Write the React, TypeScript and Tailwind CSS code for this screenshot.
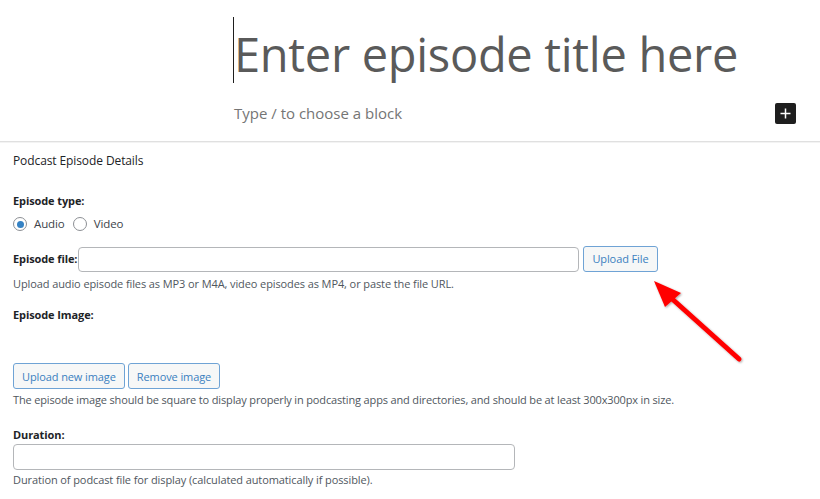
const font = { fontFamily: '"Open Sans", "Liberation Sans", sans-serif' }

function Radio({ checked, label }: { checked?: boolean; label: string }) {
  return (
    <label className="flex items-center gap-[7px]">
      <span className="w-[14px] h-[14px] rounded-full border border-[#8c8f94] flex items-center justify-center bg-white">
        {checked && <span className="w-[7px] h-[7px] rounded-full bg-[#3582c4]" />}
      </span>
      <span>{label}</span>
    </label>
  )
}

function Button({ children }: { children: string }) {
  return (
    <button className="h-[26px] px-[8px] rounded-[3px] border border-[#6fa3d5] bg-[#f6f7f7] text-[#3a80c0] text-[11px] tracking-[-0.1px] leading-none">
      {children}
    </button>
  )
}

export default function App() {
  return (
    <div className="relative w-[820px] h-[499px] bg-white overflow-hidden text-[#1d2327]" style={font}>
      <div className="h-[142px] border-b border-[#e0e0e0] shadow-[0_1px_0_#f3f3f3]">
        <div className="pl-[233px] pt-[17px]">
          <div className="h-[66px] border-l border-[#1e1e1e] text-[47px] leading-[74px] text-[#5a5a5a] tracking-[-0.3px] whitespace-nowrap">
            Enter episode title here
          </div>
        </div>
        <div className="flex items-center justify-between pl-[234px] pr-[24px] mt-[18px]">
          <span className="text-[15px] leading-[24px] text-[#757575]">Type / to choose a block</span>
          <span className="w-[21px] h-[21px] bg-[#1e1e1e] rounded-[2px] flex items-center justify-center">
            <svg width="13" height="13" viewBox="0 0 13 13">
              <path d="M6.5 1.5v10M1.5 6.5h10" stroke="#fff" strokeWidth="1.5" />
            </svg>
          </span>
        </div>
      </div>

      <div className="px-[13px] text-[11px] tracking-[-0.1px]">
        <div className="mt-[9px] leading-[20px] text-[12px] tracking-[-0.1px]">Podcast Episode Details</div>

        <div className="mt-[20px] leading-[20px] font-bold">Episode type:</div>
        <div className="mt-[3px] flex items-center gap-[8px] leading-[20px] text-[11.5px] text-[#3c434a]">
          <Radio checked label="Audio" />
          <Radio label="Video" />
        </div>

        <div className="mt-[13px] flex items-center">
          <span className="font-bold">Episode file:</span>
          <input className="ml-[1px] w-[501px] h-[25px] rounded-[4px] border border-[#b4b6b9] bg-white" />
          <div className="ml-[4px] -mt-[2px]">
            <Button>Upload File</Button>
          </div>
        </div>
        <div className="mt-[2px] leading-[20px] text-[#50575e]">
          Upload audio episode files as MP3 or M4A, video episodes as MP4, or paste the file URL.
        </div>

        <div className="mt-[11px] leading-[20px] font-bold">Episode Image:</div>
        <div className="mt-[38px] flex gap-[3px]">
          <Button>Upload new image</Button>
          <Button>Remove image</Button>
        </div>
        <div className="mt-[1px] leading-[20px] text-[#50575e] tracking-[-0.15px]">
          The episode image should be square to display properly in podcasting apps and directories, and should be at least 300x300px in size.
        </div>

        <div className="mt-[16px] leading-[18px] font-bold">Duration:</div>
        <input className="block w-[502px] h-[26px] rounded-[4px] border border-[#b4b6b9] bg-white" />
        <div className="mt-[0px] leading-[20px] text-[#50575e]">
          Duration of podcast file for display (calculated automatically if possible).
        </div>
      </div>

      <svg className="absolute left-0 top-0 pointer-events-none" width="820" height="499">
        <defs>
          <filter id="sh" x="-20%" y="-20%" width="140%" height="140%">
            <feDropShadow dx="1" dy="1" stdDeviation="1" floodColor="#000" floodOpacity="0.35" />
          </filter>
        </defs>
        <g filter="url(#sh)">
          <line x1="739" y1="359" x2="670" y2="297" stroke="#ff0000" strokeWidth="5" strokeLinecap="round" />
          <polygon points="654,281 681,293 665,307" fill="#ff0000" />
        </g>
      </svg>
    </div>
  )
}
